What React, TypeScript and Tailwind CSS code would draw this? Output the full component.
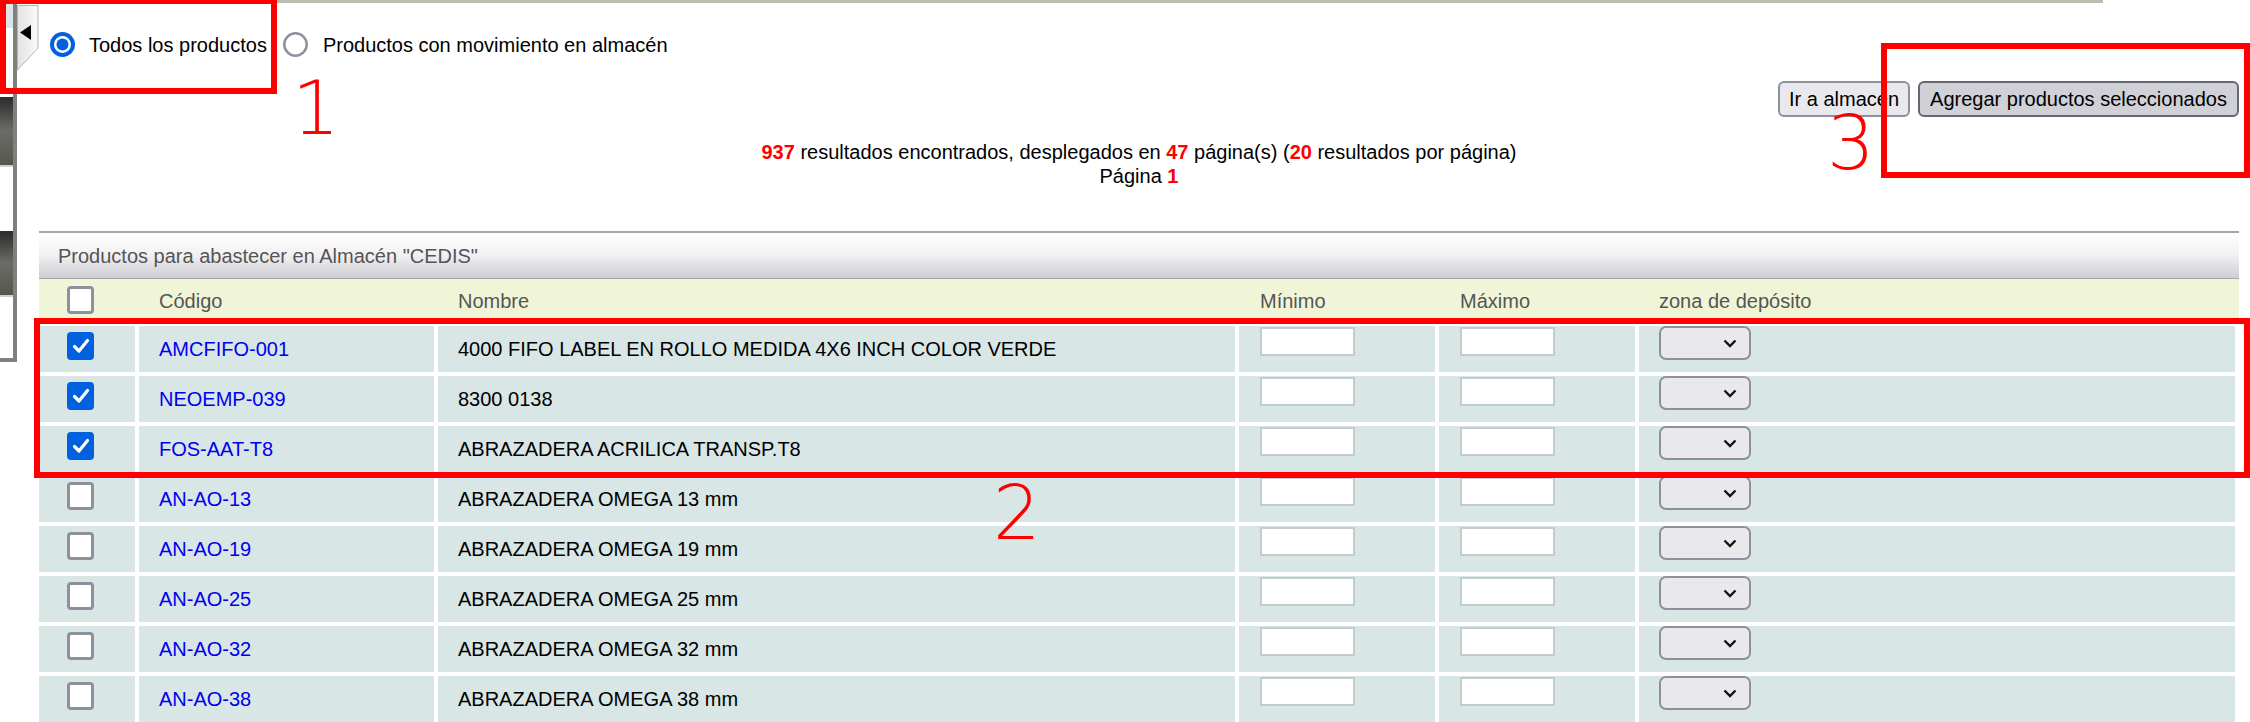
import React from "react";

const rows = [
  { code: "AMCFIFO-001", name: "4000 FIFO LABEL EN ROLLO MEDIDA 4X6 INCH COLOR VERDE", checked: true },
  { code: "NEOEMP-039", name: "8300 0138", checked: true },
  { code: "FOS-AAT-T8", name: "ABRAZADERA ACRILICA TRANSP.T8", checked: true },
  { code: "AN-AO-13", name: "ABRAZADERA OMEGA 13 mm", checked: false },
  { code: "AN-AO-19", name: "ABRAZADERA OMEGA 19 mm", checked: false },
  { code: "AN-AO-25", name: "ABRAZADERA OMEGA 25 mm", checked: false },
  { code: "AN-AO-32", name: "ABRAZADERA OMEGA 32 mm", checked: false },
  { code: "AN-AO-38", name: "ABRAZADERA OMEGA 38 mm", checked: false },
];

function Radio({ checked }: { checked: boolean }) {
  return (
    <svg width="25" height="25" viewBox="0 0 25 25" className="shrink-0">
      {checked ? (
        <>
          <circle cx="12.5" cy="12.5" r="12.5" fill="#0060df" />
          <circle cx="12.5" cy="12.5" r="8.5" fill="#fff" />
          <circle cx="12.5" cy="12.5" r="6" fill="#0060df" />
        </>
      ) : (
        <circle cx="12.5" cy="12.5" r="11.2" fill="#fff" stroke="#8f8f9d" strokeWidth="2.5" />
      )}
    </svg>
  );
}

function Checkbox({ checked }: { checked: boolean }) {
  if (checked) {
    return (
      <div className="w-[27px] h-[28px] rounded-[4px] bg-[#0060df] flex items-center justify-center">
        <svg width="20" height="20" viewBox="0 0 20 20">
          <polyline points="3.5,10.5 8,15 16.5,4.5" fill="none" stroke="#fff" strokeWidth="3.2" strokeLinecap="round" strokeLinejoin="round" />
        </svg>
      </div>
    );
  }
  return <div className="w-[27px] h-[28px] rounded-[4px] bg-white border-[3px] border-[#8f8f9d]" />;
}

function Select() {
  return (
    <div className="w-[92px] h-[34px] rounded-[7px] bg-[#e9e9ed] border-2 border-[#8f8f9d] flex items-center justify-end pr-[12px]">
      <svg width="14" height="9" viewBox="0 0 14 9">
        <polyline points="1.5,1.5 7,7 12.5,1.5" fill="none" stroke="#111" strokeWidth="2.4" />
      </svg>
    </div>
  );
}

export default function App() {
  return (
    <div className="relative w-[2250px] h-[722px] overflow-hidden bg-white text-[20px] text-black font-['Liberation_Sans',Arial,sans-serif]">
      <div className="flex">
        {/* Left side strip */}
        <div className="w-[17px] h-[362px] shrink-0 border-r-4 border-b-4 border-[#808080] flex flex-col">
          <div className="h-[2px] bg-white" />
          <div className="h-[26px] bg-[#dce5e8]" />
          <div className="h-[69px] bg-white" />
          <div className="h-[70px] bg-gradient-to-b from-[#2c2c2c] via-[#6c6c67] to-[#56564c] border-b-2 border-[#cfcfcf]" />
          <div className="h-[64px] bg-white" />
          <div className="h-[66px] bg-gradient-to-b from-[#2c2c2c] via-[#6c6c67] to-[#56564c] border-b-2 border-[#cfcfcf]" />
          <div className="flex-1 bg-white" />
        </div>

        {/* Main */}
        <div className="flex-1 pl-[22px] pr-[11px]">
          <div className="ml-[4px] w-[2060px] h-[3px] bg-[#bdbdb0]" />

          {/* Filter radios */}
          <div className="mt-[29px] h-[25px] flex items-center">
            <div className="ml-[11px]">
              <Radio checked />
            </div>
            <span className="ml-[14px]">Todos los productos</span>
            <div className="ml-[16px]">
              <Radio checked={false} />
            </div>
            <span className="ml-[15px]">Productos con movimiento en almacén</span>
          </div>

          {/* Action buttons */}
          <div className="mt-[24px] flex justify-end gap-[8px]">
            <button className="w-[132px] h-[36px] rounded-[6px] bg-[#e9e9ed] border-2 border-[#8f8f9d] text-[20px]">
              Ir a almacen
            </button>
            <button className="w-[321px] h-[36px] rounded-[6px] bg-[#d0d0d7] border-2 border-[#676774] text-[20px]">
              Agregar productos seleccionados
            </button>
          </div>

          {/* Results */}
          <div className="mt-[23px] text-center leading-[24px]">
            <div>
              <b className="text-[#ff0000]">937</b> resultados encontrados, desplegados en{" "}
              <b className="text-[#ff0000]">47</b> página(s) (<b className="text-[#ff0000]">20</b> resultados por
              página)
            </div>
            <div>
              Página <b className="text-[#ff0000]">1</b>
            </div>
          </div>

          {/* Table */}
          <div className="mt-[43px]">
            <div className="h-[48px] border-t-2 border-b border-t-[#a8a8a8] border-b-[#a9a9a9] bg-gradient-to-b from-white via-[#f1f1f3] to-[#cdcdd3] pl-[19px] flex items-center text-[#555]">
              Productos para abastecer en Almacén "CEDIS"
            </div>

            <div className="h-[43px] bg-[#f0f5d7] pr-[4px] grid grid-cols-[96px_295px_797px_196px_196px_596px] gap-x-[4px] items-center text-[#555]">
              <div className="pl-[28px] self-start pt-[7px]">
                <Checkbox checked={false} />
              </div>
              <div className="pl-[20px]">Código</div>
              <div className="pl-[20px]">Nombre</div>
              <div className="pl-[21px]">Mínimo</div>
              <div className="pl-[21px]">Máximo</div>
              <div className="pl-[20px]">zona de depósito</div>
            </div>

            <div className="mt-[4px] flex flex-col gap-[4px]">
              {rows.map((r) => (
                <div
                  key={r.code}
                  className="h-[46px] grid grid-cols-[96px_295px_797px_196px_196px_596px] gap-x-[4px]"
                >
                  <div className="bg-[#d9e6e6] pl-[28px] pt-[6px]">
                    <Checkbox checked={r.checked} />
                  </div>
                  <div className="bg-[#d9e6e6] pl-[20px] flex items-center">
                    <a className="text-[#0000ee]">{r.code}</a>
                  </div>
                  <div className="bg-[#d9e6e6] pl-[20px] flex items-center">{r.name}</div>
                  <div className="bg-[#d9e6e6] pl-[21px] pt-[1px]">
                    <div className="w-[95px] h-[29px] bg-white border-2 border-[#c2cccc]" />
                  </div>
                  <div className="bg-[#d9e6e6] pl-[21px] pt-[1px]">
                    <div className="w-[95px] h-[29px] bg-white border-2 border-[#c2cccc]" />
                  </div>
                  <div className="bg-[#d9e6e6] pl-[20px]">
                    <Select />
                  </div>
                </div>
              ))}
            </div>
          </div>
        </div>
      </div>

      {/* Side tab */}
      <svg className="absolute left-[17px] top-[5px]" width="22" height="66" viewBox="0 0 22 66">
        <defs>
          <linearGradient id="tabg" x1="0" y1="0" x2="1" y2="0">
            <stop offset="0" stopColor="#e2e2e2" />
            <stop offset="1" stopColor="#fafafa" />
          </linearGradient>
        </defs>
        <path d="M0.5 0.5 H21 V43 L0.5 65 Z" fill="url(#tabg)" stroke="#b4b4b4" strokeWidth="1" />
        <polygon points="3,27.5 14,20 14,35" fill="#000" />
      </svg>

      {/* Annotation boxes */}
      <div className="absolute left-0 top-[-2px] w-[277px] h-[96px] border-[6px] border-[#ff0000]" />
      <div className="absolute left-[1881px] top-[43px] w-[369px] h-[135px] border-[6px] border-[#ff0000]" />
      <div className="absolute left-[34px] top-[318px] w-[2216px] h-[160px] border-[6px] border-[#ff0000]" />

      <div className="absolute left-[292px] top-[71px] text-[75px] leading-none text-[#ff0000] font-['DejaVu_Sans',sans-serif] font-light">
        1
      </div>
      <div className="absolute left-[993px] top-[476px] text-[75px] leading-none text-[#ff0000] font-['DejaVu_Sans',sans-serif] font-light">
        2
      </div>
      <div className="absolute left-[1827px] top-[106px] text-[75px] leading-none text-[#ff0000] font-['DejaVu_Sans',sans-serif] font-light">
        3
      </div>
    </div>
  );
}
